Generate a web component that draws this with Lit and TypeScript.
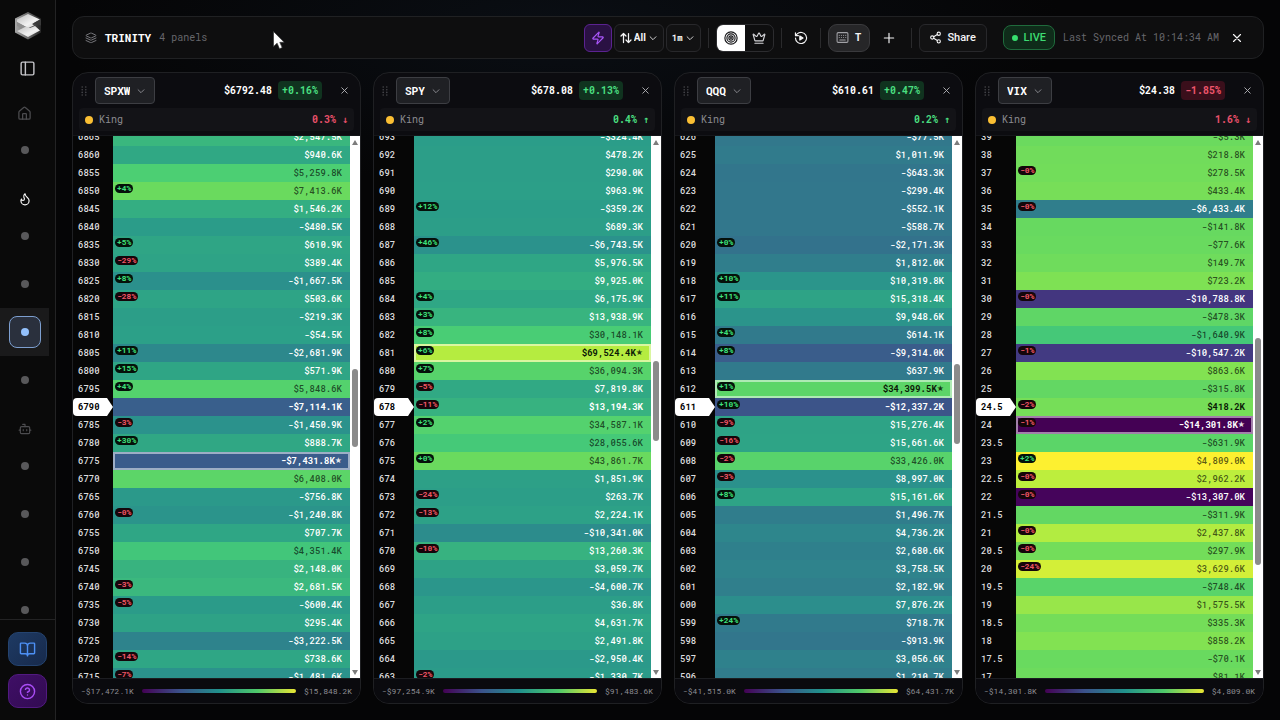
import { LitElement, html, css, svg, nothing } from "lit";
import { customElement, property } from "lit/decorators.js";
import { classMap } from "lit/directives/class-map.js";

type Row = [strike: string, value: string, change?: string];

interface PanelData {
  symbol: string;
  price: string;
  change: string;
  king: string;
  min: number;
  max: number;
  current: string;
  star: string;
  // share of the scroll track: above the thumb, the thumb, below it
  scroll: [number, number, number];
  rows: Row[];
}

const parse = (text: string): Row[] =>
  text
    .trim()
    .split("\n")
    .map((line) => line.trim().split(/\s+/) as unknown as Row);

const PANELS: PanelData[] = [
  {
    symbol: "SPXW", price: "$6792.48", change: "+0.16%", king: "0.3% ↓",
    min: -17472.1, max: 15848.2, current: "6790", star: "6775", scroll: [221, 78, 219],
    rows: parse(`
      6865 $2,547.5K
      6860 $940.6K
      6855 $5,259.8K
      6850 $7,413.6K +4%
      6845 $1,546.2K
      6840 -$480.5K
      6835 $610.9K +5%
      6830 $389.4K -29%
      6825 -$1,667.5K +8%
      6820 $503.6K -28%
      6815 -$219.3K
      6810 -$54.5K
      6805 -$2,681.9K +11%
      6800 $571.9K +15%
      6795 $5,848.6K +4%
      6790 -$7,114.1K
      6785 -$1,450.9K -3%
      6780 $888.7K +30%
      6775 -$7,431.8K
      6770 $6,408.0K
      6765 -$756.8K
      6760 -$1,240.8K -0%
      6755 $707.7K
      6750 $4,351.4K
      6745 $2,148.0K
      6740 $2,681.5K -3%
      6735 -$600.4K -5%
      6730 $295.4K
      6725 -$3,222.5K
      6720 $738.6K -14%
      6715 -$1,481.6K -7%`),
  },
  {
    symbol: "SPY", price: "$678.08", change: "+0.13%", king: "0.4% ↑",
    min: -97254.9, max: 91483.6, current: "678", star: "681", scroll: [213, 80, 225],
    rows: parse(`
      693 -$324.4K
      692 $478.2K
      691 $290.0K
      690 $963.9K
      689 -$359.2K +12%
      688 $689.3K
      687 -$6,743.5K +46%
      686 $5,976.5K
      685 $9,925.0K
      684 $6,175.9K +4%
      683 $13,938.9K +3%
      682 $30,148.1K +8%
      681 $69,524.4K +6%
      680 $36,094.3K +7%
      679 $7,819.8K -5%
      678 $13,194.3K -11%
      677 $34,587.1K +2%
      676 $28,055.6K
      675 $43,861.7K +0%
      674 $1,851.9K
      673 $263.7K -24%
      672 $2,224.1K -13%
      671 -$10,341.0K
      670 $13,260.3K -10%
      669 $3,059.7K
      668 -$4,600.7K
      667 $36.8K
      666 $4,631.7K
      665 $2,491.8K
      664 -$2,950.4K
      663 -$1,330.7K -2%`),
  },
  {
    symbol: "QQQ", price: "$610.61", change: "+0.47%", king: "0.2% ↑",
    min: -41515, max: 64431.7, current: "611", star: "612", scroll: [216, 80, 222],
    rows: parse(`
      626 -$77.5K
      625 $1,011.9K
      624 -$643.3K
      623 -$299.4K
      622 -$552.1K
      621 -$588.7K
      620 -$2,171.3K +0%
      619 $1,812.0K
      618 $10,319.8K +10%
      617 $15,318.4K +11%
      616 $9,948.6K
      615 $614.1K +4%
      614 -$9,314.0K +8%
      613 $637.9K
      612 $34,399.5K +1%
      611 -$12,337.2K +10%
      610 $15,276.4K -9%
      609 $15,661.6K -16%
      608 $33,426.0K -2%
      607 $8,997.0K -3%
      606 $15,161.6K +8%
      605 $1,496.7K
      604 $4,736.2K
      603 $2,680.6K
      602 $3,758.5K
      601 $2,182.9K
      600 $7,876.2K
      599 $718.7K +24%
      598 -$913.9K
      597 $3,056.6K
      596 $1,210.7K`),
  },
  {
    symbol: "VIX", price: "$24.38", change: "-1.85%", king: "1.6% ↓",
    min: -14301.8, max: 4809, current: "24.5", star: "24", scroll: [190, 227, 101],
    rows: parse(`
      39 -$5.3K
      38 $218.8K
      37 $278.5K -0%
      36 $433.4K
      35 -$6,433.4K -0%
      34 -$141.8K
      33 -$77.6K
      32 $149.7K
      31 $723.2K
      30 -$10,788.8K -0%
      29 -$478.3K
      28 -$1,640.9K
      27 -$10,547.2K -1%
      26 $863.6K
      25 -$315.8K
      24.5 $418.2K -2%
      24 -$14,301.8K -1%
      23.5 -$631.9K
      23 $4,809.0K +2%
      22.5 $2,962.2K -0%
      22 -$13,307.0K -0%
      21.5 -$311.9K
      21 $2,437.8K -0%
      20.5 $297.9K -0%
      20 $3,629.6K -24%
      19.5 -$748.4K
      19 $1,575.5K
      18.5 $335.3K
      18 $858.2K
      17.5 -$70.1K
      17 $81.1K`),
  },
];

const SCALE: [number, number, number, number][] = [
  [0, 68, 1, 84],
  [0.06, 69, 4, 92],
  [0.19, 67, 56, 129],
  [0.31, 57, 95, 140],
  [0.42, 47, 129, 140],
  [0.48, 43, 146, 140],
  [0.51, 43, 156, 137],
  [0.553, 48, 168, 132],
  [0.6, 58, 183, 126],
  [0.655, 66, 198, 122],
  [0.682, 76, 207, 115],
  [0.747, 106, 218, 94],
  [0.793, 130, 226, 82],
  [0.88, 180, 236, 64],
  [0.91, 192, 238, 60],
  [1, 253, 240, 48],
];

function scaleColor(t: number): string {
  for (let i = 1; i < SCALE.length; i++) {
    const [b, ...hi] = SCALE[i];
    const [a, ...lo] = SCALE[i - 1];
    if (t <= b) {
      const k = (t - a) / (b - a);
      return `rgb(${lo.map((c, j) => Math.round(c + (hi[j] - c) * k)).join(",")})`;
    }
  }
  return "rgb(253,240,48)";
}

const money = (v: number) =>
  `${v < 0 ? "-" : ""}$${Math.abs(v).toLocaleString("en-US", { minimumFractionDigits: 1 })}K`;

const ICONS = {
  layers: svg`<path d="M12.8 2.2a2 2 0 0 0-1.6 0L2.6 6.1a1 1 0 0 0 0 1.8l8.6 3.9a2 2 0 0 0 1.6 0l8.6-3.9a1 1 0 0 0 0-1.8Z"/><path d="m2 12 9.2 4.2a2 2 0 0 0 1.6 0L22 12M2 17l9.2 4.2a2 2 0 0 0 1.6 0L22 17"/>`,
  sidebar: svg`<rect x="3" y="3" width="18" height="18" rx="2"/><path d="M9 3v18"/>`,
  home: svg`<path d="M15 21v-8a1 1 0 0 0-1-1h-4a1 1 0 0 0-1 1v8"/><path d="M3 10a2 2 0 0 1 .7-1.5l7-6a2 2 0 0 1 2.6 0l7 6A2 2 0 0 1 21 10v9a2 2 0 0 1-2 2H5a2 2 0 0 1-2-2z"/>`,
  flame: svg`<path d="M8.5 14.5A2.5 2.5 0 0 0 11 12c0-1.38-.5-2-1-3-1.07-2.14-.22-4.05 2-6 .5 2.5 2 4.9 4 6.5s3 3.5 3 5.5a7 7 0 1 1-14 0c0-1.15.43-2.29 1-3a2.5 2.5 0 0 0 2.5 2.5z"/>`,
  bot: svg`<path d="M12 8V4H8"/><rect x="4" y="8" width="16" height="12" rx="2"/><path d="M2 14h2M20 14h2M15 13v2M9 13v2"/>`,
  book: svg`<path d="M12 7v14M3 18a1 1 0 0 1-1-1V4a1 1 0 0 1 1-1h5a4 4 0 0 1 4 4 4 4 0 0 1 4-4h5a1 1 0 0 1 1 1v13a1 1 0 0 1-1 1h-6a3 3 0 0 0-3 3 3 3 0 0 0-3-3z"/>`,
  help: svg`<circle cx="12" cy="12" r="10"/><path d="M9.1 9a3 3 0 0 1 5.8 1c0 2-3 3-3 3M12 17h.01"/>`,
  zap: svg`<path d="M4 14a1 1 0 0 1-.8-1.6l9.9-10.2a.5.5 0 0 1 .9.5l-2 6A1 1 0 0 0 13 10h7a1 1 0 0 1 .8 1.6l-9.9 10.2a.5.5 0 0 1-.9-.5l2-6A1 1 0 0 0 11 14z"/>`,
  sort: svg`<path d="M2 8l5-5 5 5M7 3v18M22 16l-5 5-5-5M17 21V3"/>`,
  chevron: svg`<path d="m5 9 7 7 7-7"/>`,
  target: svg`<circle cx="12" cy="12" r="10.5"/><circle cx="12" cy="12" r="7"/><circle cx="12" cy="12" r="3.6"/><circle cx="12" cy="12" r=".8"/>`,
  crown: svg`<path d="M11.6 3.3a.5.5 0 0 1 .9 0L15.400 8.900a1 1 0 0 0 1.500.3L21.200 5.500a.5.5 0 0 1 .8.500l-2.800 10.200a1 1 0 0 1-1 .8H5.800a1 1 0 0 1-1-.8L2 6a.5.5 0 0 1 .8-.5l4.300 3.700a1 1 0 0 0 1.500-.3zM5 21h14"/>`,
  replay: svg`<path d="M2.500 12a9.500 9.500 0 1 0 3-7L2.500 8M2.500 3v5h5"/><path d="M10 8.500v7l5.500-3.500z" fill="currentColor"/>`,
  keyboard: svg`<rect x="2" y="3" width="20" height="18" rx="2"/><path d="M6 8h.01M10 8h.01M14 8h.01M18 8h.01M6 12h.01M10 12h.01M14 12h.01M18 12h.01M7 16.500h10"/>`,
  plus: svg`<path d="M4 12h16M12 4v16"/>`,
  share: svg`<circle cx="18" cy="5" r="3"/><circle cx="6" cy="12" r="3"/><circle cx="18" cy="19" r="3"/><path d="m8.600 13.500 6.800 4M15.400 6.500l-6.800 4"/>`,
  close: svg`<path d="M18 6 6 18M6 6l12 12"/>`,
};

const icon = (name: keyof typeof ICONS, size: number, stroke = 2) => html`<svg
  width=${size} height=${size} viewBox="0 0 24 24" fill="none" stroke="currentColor"
  stroke-width=${stroke} stroke-linecap="round" stroke-linejoin="round" aria-hidden="true"
>${ICONS[name]}</svg>`;

const shared = css`
  * { box-sizing: border-box; }
  svg { display: block; flex: none; }
  button, select {
    margin: 0;
    padding: 0;
    border: 0;
    background: none;
    color: inherit;
    font: inherit;
    cursor: pointer;
  }
  button { display: flex; align-items: center; justify-content: center; }
  select { appearance: none; field-sizing: content; outline: none; }
  option { background: #18181b; color: #fff; }
`;

@customElement("side-nav")
export class SideNav extends LitElement {
  static styles = [
    shared,
    css`
      :host {
        width: 56px;
        flex: none;
        display: flex;
        flex-direction: column;
        background: #0a0a0a;
        border-right: 1px solid #232324;
        color: #e4e4e7;
      }
      .top {
        height: 88px;
        flex: none;
        display: flex;
        flex-direction: column;
        align-items: center;
        padding-top: 10px;
        gap: 16px;
      }
      .toggle { width: 24px; height: 24px; color: #c4c4c8; }
      nav {
        flex: 1;
        min-height: 0;
        overflow: hidden;
        width: 49px;
      }
      .section {
        height: 26px;
        margin-top: 12px;
        display: flex;
        align-items: center;
        justify-content: center;
        color: #4c4c4f;
      }
      .section.lit { color: #fafafa; }
      .item {
        height: 48px;
        display: flex;
        align-items: center;
        justify-content: center;
      }
      .item i {
        width: 32px;
        height: 32px;
        display: flex;
        align-items: center;
        justify-content: center;
        border-radius: 8px;
        border: 1px solid transparent;
      }
      .item i::before {
        content: "";
        width: 8px;
        height: 8px;
        border-radius: 50%;
        background: #58585a;
      }
      .item.active { background: #1a1a1b; }
      .item.active i { background: #2a303d; border-color: #7d9fd0; }
      .item.active i::before { background: #93c0fb; }
      .foot {
        border-top: 1px solid #232324;
        padding: 12px 8px;
        display: grid;
        gap: 8px;
      }
      .foot button { height: 34px; border-radius: 10px; border-width: 1px; border-style: solid; }
      .docs { background: linear-gradient(135deg, #1e3a63, #172a4c); border-color: #24436f; color: #4d90f5; }
      .help { background: linear-gradient(135deg, #3f0f66, #320b52); border-color: #511a80; color: #a94df5; }
    `,
  ];

  private dots(n: number, active = -1) {
    return Array.from({ length: n }, (_, i) => html`
      <a class=${classMap({ item: true, active: i === active })} href="#" aria-label="Page"><i></i></a>`);
  }

  render() {
    return html`
      <div class="top">
        <svg width="30" height="30" viewBox="0 0 30 30" aria-hidden="true">
          <defs>
            <linearGradient id="side" x1="0" y1="0" x2="1" y2="0">
              <stop offset="0" stop-color="#a8a8a8" /><stop offset=".5" stop-color="#6a6a6a" /><stop offset="1" stop-color="#262626" />
            </linearGradient>
            <linearGradient id="lid" x1="0" y1="0" x2="1" y2="1">
              <stop offset="0" stop-color="#bdbdbd" /><stop offset=".6" stop-color="#f2f2f2" /><stop offset="1" stop-color="#c8c8c8" />
            </linearGradient>
          </defs>
          <path d="M15 2 28 8.500v14L15 29.500 2 22.500v-14z" fill="url(#side)" />
          <path d="M4 9.500 15 4l12 5.500-8 4.500 2 1.500-6 2.500L4 12z" fill="url(#lid)" />
          <path d="M4 12v4l8 3 3-1z" fill="#8e8e8e" />
          <path d="M4 21l9-4.500 4 1.500 5-2 5 4.500L15 27z" fill="url(#lid)" />
          <path d="M28 9v6.500L20 13.500z" fill="#3a3a3a" />
        </svg>
        <button class="toggle" aria-label="Toggle sidebar">${icon("sidebar", 17)}</button>
      </div>
      <nav>
        <div class="section">${icon("home", 15)}</div>
        ${this.dots(1)}
        <div class="section lit">${icon("flame", 14)}</div>
        ${this.dots(4, 2)}
        <div class="section">${icon("bot", 14)}</div>
        ${this.dots(4)}
      </nav>
      <div class="foot">
        <button class="docs" aria-label="Docs">${icon("book", 17)}</button>
        <button class="help" aria-label="Help">${icon("help", 17)}</button>
      </div>`;
  }
}

@customElement("heat-panel")
export class HeatPanel extends LitElement {
  @property({ attribute: false }) data!: PanelData;

  static styles = [
    shared,
    css`
      :host {
        flex: 1 1 0;
        min-width: 0;
        display: flex;
        flex-direction: column;
        overflow: hidden;
        border: 1px solid #1f2023;
        border-radius: 16px;
        background: #0c0c10;
      }
      header {
        flex: none;
        padding: 4px 6px;
        display: grid;
        gap: 4px;
        border-bottom: 1px solid #15161a;
      }
      .line { display: flex; align-items: center; height: 27px; padding: 0 2px; }
      .grip { color: #47474c; }
      .symbol {
        display: flex;
        align-items: center;
        gap: 6px;
        height: 27px;
        margin-left: 8px;
        padding: 0 8px;
        border: 1px solid #3d3e43;
        border-radius: 4px;
        background: #1f2024;
        color: #fff;
        font-size: 11px;
        font-weight: 700;
      }
      .symbol svg { color: #9a9aa0; }
      .price { margin-left: auto; color: #fff; font-weight: 700; }
      .change {
        margin-left: 6px;
        padding: 0 4px;
        line-height: 19px;
        border-radius: 4px;
        font-weight: 700;
        color: #4ade80;
        background: #10331f;
      }
      .change.down { color: #f0566c; background: #3a0f1b; }
      .close { width: 16px; height: 16px; margin-left: 14px; color: #b4b4b8; }
      .king {
        display: flex;
        align-items: center;
        gap: 6px;
        height: 23px;
        padding: 0 6px;
        border-radius: 4px;
        background: #131317;
        color: #8b8b90;
      }
      .king::before {
        content: "";
        width: 8px;
        height: 8px;
        border-radius: 50%;
        background: #fbbf33;
      }
      .king b { margin-left: auto; color: #4ade80; }
      .king b.down { color: #e8506a; }
      .body { flex: 1; min-height: 0; display: flex; overflow: hidden; background: #060606; }
      .view { flex: 1; min-width: 0; overflow: hidden; }
      table {
        width: 100%;
        margin-top: -8px;
        table-layout: fixed;
        border-spacing: 0;
        font-size: 9px;
        line-height: 18px;
      }
      th, td { height: 18px; padding: 0; }
      th { width: 40px; text-align: left; }
      .strike { padding-left: 5px; color: #dcdcde; font-weight: 500; }
      .strike.now {
        color: #000;
        font-weight: 700;
        background: #fff;
        border-radius: 4px;
        clip-path: polygon(0 0, 85% 0, 100% 50%, 85% 100%, 0 100%);
      }
      .cell {
        height: 18px;
        display: flex;
        align-items: flex-start;
        padding: 0 8px 0 2px;
        color: #fff;
        font-weight: 500;
      }
      .cell.dark { color: rgba(0, 0, 0, 0.65); }
      .cell.strong { font-weight: 700; }
      .cell.dark.strong { color: #0b1a06; }
      .cell.star { box-shadow: inset 0 0 0 2px rgba(255, 255, 255, 0.5); }
      .chip {
        margin-top: 2px;
        padding: 0 2px;
        border-radius: 5px;
        background: #05100a;
        font-size: 8px;
        line-height: 9px;
        font-weight: 700;
        color: #3ee07a;
      }
      .chip.down { background: #14060a; color: #ee5565; }
      .value { margin-left: auto; }
      .mark { font-family: "DejaVu Sans", sans-serif; font-size: 8px; font-weight: 400; opacity: 0.85; }
      .bar {
        width: 10px;
        flex: none;
        display: flex;
        flex-direction: column;
        align-items: center;
        background: #fff;
      }
      .arrow { height: 12px; flex: none; display: flex; align-items: center; }
      .thumb { width: 6px; border-radius: 3px; background: #8b8b8b; }
      footer {
        flex: none;
        height: 25px;
        display: flex;
        align-items: center;
        gap: 8px;
        padding: 0 8px;
        border-top: 1px solid #1c1d21;
        background: #0a0a0e;
        color: #8e8e94;
        font-size: 8px;
      }
      .ramp {
        flex: 1;
        height: 4px;
        border-radius: 2px;
        background: linear-gradient(90deg, #440154, #3b528b, #21918c, #4fc96a, #e9e634);
      }
    `,
  ];

  private row([strike, value, change]: Row) {
    const d = this.data;
    const amount = Number(value.replace(/[$,K]/g, ""));
    const t = Math.max(0, Math.min(1, (amount - d.min) / (d.max - d.min)));
    const now = strike === d.current;
    const star = strike === d.star;
    return html`<tr>
      <th scope="row"><div class=${classMap({ strike: true, now })}>${strike}</div></th>
      <td>
        <div
          class=${classMap({ cell: true, dark: t > 0.64, strong: now || star, star })}
          style="background:${scaleColor(t)}"
        >
          ${change
            ? html`<span class=${classMap({ chip: true, down: change[0] === "-" })}>${change}</span>`
            : nothing}
          <span class="value">${value}</span>${star ? html`<span class="mark">★</span>` : nothing}
        </div>
      </td>
    </tr>`;
  }

  render() {
    const d = this.data;
    const [above, thumb, below] = d.scroll;
    return html`
      <header>
        <div class="line">
          <svg class="grip" width="6" height="10" viewBox="0 0 6 10" fill="currentColor" aria-hidden="true">
            ${[1, 3.7, 6.4, 9].map((y) => svg`<circle cx="1.200" cy=${y} r=".8"/><circle cx="4.800" cy=${y} r=".8"/>`)}
          </svg>
          <label class="symbol">
            <select aria-label="Symbol" .value=${d.symbol}>
              ${PANELS.map((p) => html`<option ?selected=${p.symbol === d.symbol}>${p.symbol}</option>`)}
            </select>
            ${icon("chevron", 10)}
          </label>
          <span class="price">${d.price}</span>
          <span class=${classMap({ change: true, down: d.change[0] === "-" })}>${d.change}</span>
          <button class="close" aria-label="Close panel">${icon("close", 11)}</button>
        </div>
        <div class="king">King<b class=${classMap({ down: d.king.includes("↓") })}>${d.king}</b></div>
      </header>
      <div class="body">
        <div class="view"><table><tbody>${d.rows.map((r) => this.row(r))}</tbody></table></div>
        <div class="bar">
          <span class="arrow"><svg width="6" height="5" viewBox="0 0 6 5"><path d="M3 0 6 5H0z" fill="#7c7c7c"/></svg></span>
          <span style="flex-grow:${above}"></span>
          <span class="thumb" style="flex-grow:${thumb}"></span>
          <span style="flex-grow:${below}"></span>
          <span class="arrow"><svg width="6" height="5" viewBox="0 0 6 5"><path d="M3 5 6 0H0z" fill="#7c7c7c"/></svg></span>
        </div>
      </div>
      <footer><span>${money(d.min)}</span><span class="ramp"></span><span>${money(d.max)}</span></footer>`;
  }
}

@customElement("app-root")
export class AppRoot extends LitElement {
  static styles = [
    shared,
    css`
      :host {
        position: relative;
        display: flex;
        height: 100vh;
        overflow: hidden;
        background: radial-gradient(ellipse 500px 160px at 44% 4%, #0a0e14, #050506);
        color: #e4e4e7;
        font: 10px/14px "Roboto Mono", "DejaVu Sans Mono", "Liberation Mono", monospace;
      }
      main {
        flex: 1;
        min-width: 0;
        display: flex;
        flex-direction: column;
        gap: 13px;
        padding: 16px;
      }
      .toolbar {
        flex: none;
        height: 43px;
        display: flex;
        align-items: center;
        padding: 0 18px 0 12px;
        border: 1px solid #202123;
        border-radius: 12px;
        background: #0e0e0f;
      }
      .layers { color: #77777c; }
      h1 { margin: 0 8px; font-size: 11px; line-height: 14px; color: #fff; }
      .muted { color: #66666b; }
      .tools { margin-left: auto; display: flex; align-items: center; }
      .tool {
        height: 28px;
        display: flex;
        align-items: center;
        justify-content: center;
        gap: 2px;
        padding: 0 5px;
        border: 1px solid #28282b;
        border-radius: 6px;
        background: #121213;
        color: #f4f4f5;
        font-family: Roboto, Inter, sans-serif;
        font-weight: 700;
        margin-left: 2px;
      }
      .tool.zap { width: 28px; background: #2a1143; border-color: #5b2391; color: #a855f7; }
      .tool.interval { font-family: "Roboto Mono", "DejaVu Sans Mono", monospace; font-size: 9px; }
      .sep { width: 1px; height: 20px; margin: 0 7px; background: #2a2a2c; }
      .group {
        display: flex;
        height: 28px;
        overflow: hidden;
        border: 1px solid #2c2c2f;
        border-radius: 7px;
      }
      .group button { width: 28px; color: #d4d4d8; }
      .group .on { background: #fff; color: #18181b; }
      .plain { width: 24px; height: 28px; color: #f4f4f5; }
      .plain.add { margin: 0 3px 0 7px; }
      .tool.keys { width: 42px; gap: 6px; margin: 0; background: #262628; border-color: #3a3a3d; border-radius: 9px; }
      .keys svg { color: #a1a1a6; }
      .tool.share { width: 68px; gap: 5px; margin: 0 16px 0 0; font-size: 11px; font-weight: 500; }
      .live {
        display: flex;
        align-items: center;
        gap: 6px;
        height: 25px;
        padding: 0 8px;
        border: 1px solid #1f6b3c;
        border-radius: 8px;
        background: #0f2c1a;
        color: #3ddc72;
        font: 500 11px/14px Roboto, sans-serif;
      }
      .live::before {
        content: "";
        width: 6px;
        height: 6px;
        border-radius: 50%;
        background: #37e06e;
      }
      .sync { margin: 0 10px 0 8px; }
      .exit { width: 16px; height: 16px; color: #f4f4f5; }
      .panels { flex: 1; min-height: 0; display: flex; gap: 12px; }
      .pointer { position: absolute; left: 272px; top: 30px; }
    `,
  ];

  render() {
    return html`
      <side-nav></side-nav>
      <main>
        <div class="toolbar">
          <span class="layers">${icon("layers", 12)}</span>
          <h1>TRINITY</h1>
          <span class="muted">4 panels</span>
          <div class="tools">
            <button class="tool zap" aria-label="Quick mode">${icon("zap", 14)}</button>
            <label class="tool">
              ${icon("sort", 12, 2.5)}
              <select aria-label="Sort"><option>All</option></select>
              ${icon("chevron", 10)}
            </label>
            <label class="tool interval">
              <select aria-label="Interval"><option>1m</option></select>
              ${icon("chevron", 10)}
            </label>
            <span class="sep"></span>
            <div class="group">
              <button class="on" aria-label="Target">${icon("target", 14)}</button>
              <button aria-label="Crown">${icon("crown", 14)}</button>
            </div>
            <span class="sep"></span>
            <button class="plain" aria-label="Replay">${icon("replay", 14)}</button>
            <span class="sep"></span>
            <button class="tool keys">${icon("keyboard", 13)}T</button>
            <button class="plain add" aria-label="Add panel">${icon("plus", 14)}</button>
            <span class="sep"></span>
            <button class="tool share">${icon("share", 13)}Share</button>
            <span class="live">LIVE</span>
            <span class="muted sync">Last Synced At 10:14:34 AM</span>
            <button class="exit" aria-label="Close">${icon("close", 14)}</button>
          </div>
        </div>
        <div class="panels">${PANELS.map((p) => html`<heat-panel .data=${p}></heat-panel>`)}</div>
      </main>
      <svg class="pointer" width="13" height="20" viewBox="0 0 13 20" aria-hidden="true">
        <path d="M1.500 1.500v15l3.600-3.300 2.400 5.600 2.700-1.200-2.400-5.300h4.400z" fill="#fff" stroke="#333" stroke-width=".7" />
      </svg>`;
  }
}
